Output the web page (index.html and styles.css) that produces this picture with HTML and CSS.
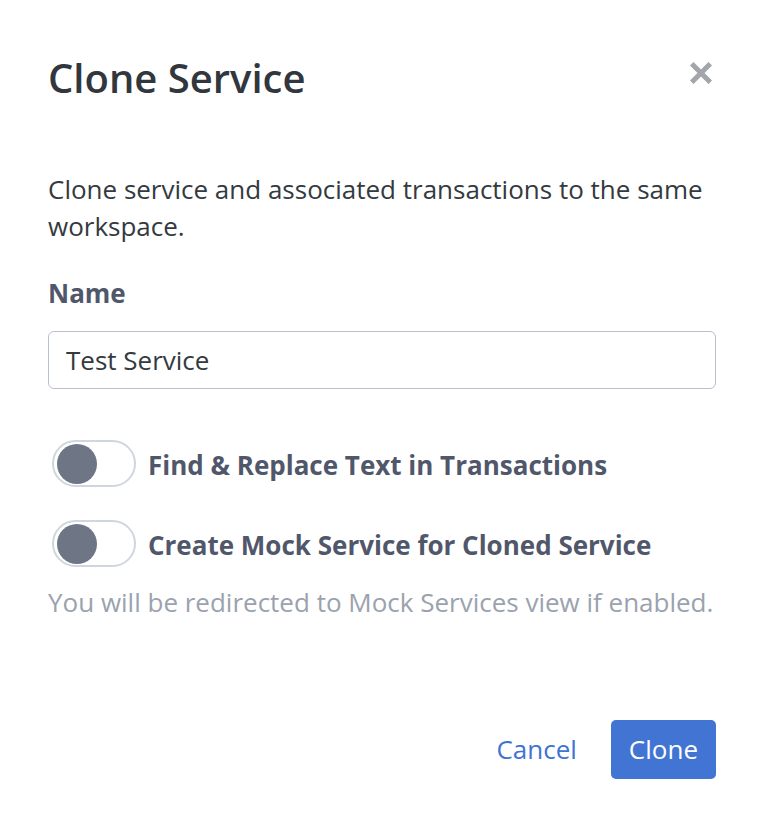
FILE: index.html
```html
<!DOCTYPE html>
<html lang="en">
<head>
  <meta charset="UTF-8">
  <meta name="viewport" content="width=device-width, initial-scale=1.0">
  <title>Clone Service</title>
  <link rel="stylesheet" href="styles.css">
</head>
<body>
  <div class="modal">
    <div class="modal-header">
      <h1>Clone Service</h1>
      <button class="close" aria-label="Close">
        <svg width="22" height="22" viewBox="0 0 22 22">
          <path d="M3.5 3.5 L18.5 18.5 M18.5 3.5 L3.5 18.5" stroke="#a2a5aa" stroke-width="5" stroke-linecap="square"/>
        </svg>
      </button>
    </div>
    <p class="description">Clone service and associated transactions to the same workspace.</p>
    <label class="field-label" for="service-name">Name</label>
    <input type="text" id="service-name" value="Test Service">
    <div class="toggle-row first">
      <span class="toggle"><span class="knob"></span></span>
      <span class="toggle-label">Find &amp; Replace Text in Transactions</span>
    </div>
    <div class="toggle-row">
      <span class="toggle"><span class="knob"></span></span>
      <span class="toggle-label">Create Mock Service for Cloned Service</span>
    </div>
    <p class="hint">You will be redirected to Mock Services view if enabled.</p>
    <div class="actions">
      <button class="cancel">Cancel</button>
      <button class="primary">Clone</button>
    </div>
  </div>
</body>
</html>
```
FILE: styles.css
```css
body {
  margin: 0;
  background: #fff;
  font-family: 'Open Sans', sans-serif;
  color: #343a40;
}

.modal {
  width: 668px;
  padding: 50px 54px 0 48px;
}

.modal-header {
  display: flex;
  justify-content: space-between;
  align-items: flex-start;
}

h1 {
  margin: 0;
  font-size: 40px;
  font-weight: 600;
  line-height: 56px;
  color: #32373d;
}

.close {
  display: flex;
  background: none;
  border: none;
  padding: 0;
  margin: 12px 4px 0 0;
  cursor: pointer;
}

.description {
  margin: 65px 0 0;
  font-size: 26px;
  line-height: 37px;
  color: #343a40;
}

.field-label {
  display: block;
  margin-top: 30px;
  font-size: 26px;
  font-weight: 700;
  line-height: 37px;
  color: #50576a;
}

input {
  display: block;
  width: 100%;
  height: 58px;
  margin-top: 19px;
  padding: 0 17px;
  border: 1.5px solid #b7c0cc;
  border-radius: 6px;
  box-sizing: border-box;
  font-family: inherit;
  font-size: 26px;
  color: #343a40;
}

.toggle-row {
  display: flex;
  align-items: center;
  gap: 12px;
  margin-top: 33px;
  padding-left: 4px;
}

.toggle-row.first {
  margin-top: 51px;
}

.toggle {
  display: flex;
  align-items: center;
  width: 84px;
  height: 47px;
  padding: 0 3px;
  border: 2px solid #d0d6df;
  border-radius: 24px;
  box-sizing: border-box;
}

.knob {
  width: 40px;
  height: 40px;
  border-radius: 50%;
  background: #6e7584;
}

.toggle-label {
  padding-top: 3px;
  font-size: 26px;
  font-weight: 700;
  line-height: 37px;
  color: #50576a;
}

.hint {
  margin: 17px 0 0;
  font-size: 26px;
  line-height: 37px;
  color: #9aa2ae;
}

.actions {
  display: flex;
  justify-content: flex-end;
  align-items: center;
  gap: 34px;
  margin-top: 99px;
}

.actions button {
  font-family: inherit;
  font-size: 26px;
  border: none;
  cursor: pointer;
}

.cancel {
  background: none;
  color: #3f73d4;
  padding: 0 0 2px;
}

.primary {
  background: #4174d3;
  color: #fff;
  height: 59px;
  padding: 0 18px 2px;
  border-radius: 5px;
}
```
